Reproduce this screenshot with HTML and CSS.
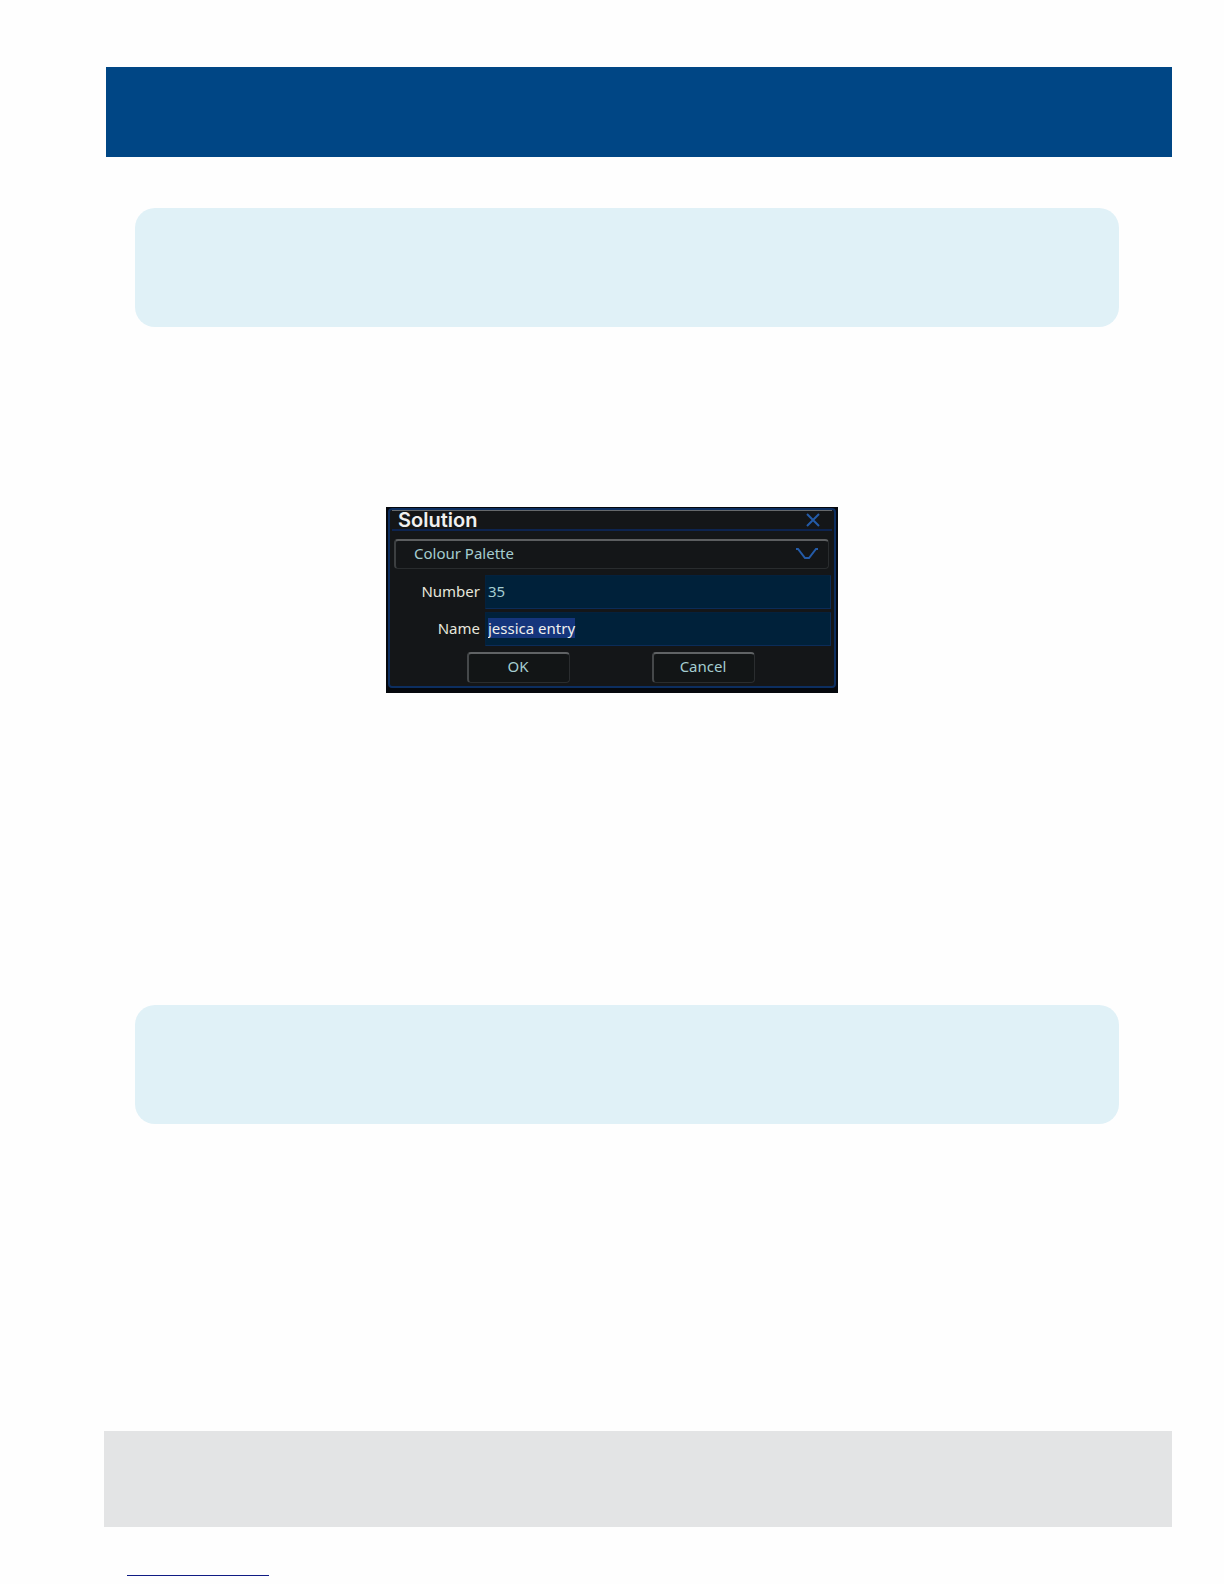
FILE: index.html
```html
<!DOCTYPE html>
<html lang="en">
<head>
	<meta charset="utf-8">
	<title>Solution</title>
	<link rel="stylesheet" href="styles.css">
	<script type="text/javascript">
		window.addEventListener('load', seleccionar);
		function seleccionar() {
			var nombre = document.getElementById("name");
			nombre.focus();
			nombre.select();
		}
	</script>
</head>
<body>
	<header class="banner"></header>
	<main>
		<div class="note"></div>
		<form class="dialog">
			<div class="window">
				<div class="titlebar">
					<h1 class="title">Solution</h1>
					<button type="button" class="close" aria-label="Close">
						<svg width="14" height="14" viewBox="0 0 14 14"><path d="M1 1L13 13M13 1L1 13"/></svg>
					</button>
				</div>
				<div class="type">
					<select class="list" aria-label="Type">
						<option>Colour Palette</option>
					</select>
					<svg class="arrow" width="22" height="12" viewBox="0 0 22 12"><path d="M0 1H2L9 10H13L20 1H22"/></svg>
				</div>
				<div class="fields">
					<label for="number">Number</label>
					<input type="text" id="number" class="field" value="35">
					<label for="name">Name</label>
					<input type="text" id="name" class="field" value="jessica entry">
				</div>
				<div class="buttons">
					<button type="button" class="boton">OK</button>
					<button type="button" class="boton">Cancel</button>
				</div>
			</div>
		</form>
		<div class="note"></div>
	</main>
	<footer class="footer"></footer>
	<a href="#" class="link" aria-label="Top"></a>
</body>
</html>
```
FILE: styles.css
```css
*
{
	box-sizing: border-box;
}
body
{
	margin: 0;
	padding-top: 67px;
	background-color: #fefefe;
	font-family: "Noto Sans", sans-serif;
	font-size: 15px;
}
.banner
{
	height: 90px;
	margin: 0 52px 0 106px;
	background-color: #004685;
}
.note
{
	height: 119px;
	margin: 51px 105px 0 135px;
	border-radius: 20px;
	background-color: #e0f1f7;
}
.dialog
{
	width: 452px;
	margin: 180px auto 312px;
	padding: 1px 2px 5px;
	background-color: #05080d;
}
.window
{
	padding: 0 2px 3px;
	border: 2px solid #0c2e60;
	border-radius: 4px;
	background-color: #141618;
}
.titlebar
{
	display: flex;
	justify-content: space-between;
	align-items: center;
	height: 21px;
	padding: 0 12px 0 6px;
	border-top: 1px solid #66696c;
	border-bottom: 2px solid #0d2450;
}
.title
{
	margin: 0;
	color: #f0f0f0;
	font-family: Inter, sans-serif;
	font-size: 20px;
	font-weight: 600;
	line-height: 18px;
}
.close
{
	display: flex;
	padding: 0;
	border: 0;
	background: none;
}
.close svg, .arrow
{
	fill: none;
	stroke: #245ba8;
	stroke-width: 2;
}
.type
{
	position: relative;
	margin: 8px 3px 6px 2px;
}
.list
{
	display: block;
	appearance: none;
	width: 100%;
	height: 30px;
	padding: 0 18px 3px;
	border: 1px solid #292c2e;
	border-top: 2px solid #5c5e60;
	border-left: 2px solid #3c3f41;
	border-radius: 4px;
	background-color: #141618;
	color: #a5cdd0;
	font: inherit;
}
.arrow
{
	position: absolute;
	top: 9px;
	right: 11px;
	pointer-events: none;
}
.fields
{
	display: grid;
	grid-template-columns: 88px 1fr;
	column-gap: 5px;
	row-gap: 3px;
	align-items: center;
	padding-right: 1px;
	color: #e6e6dc;
	text-align: right;
}
.fields label
{
	padding-bottom: 2px;
}
.field
{
	width: 100%;
	height: 34px;
	padding: 0 2px 2px;
	border: 1px solid #04213d;
	border-right-color: #0b2c58;
	border-bottom-color: #0b2c58;
	outline: none;
	background-color: #00213a;
	color: #a5cdd0;
	font: inherit;
}
.field::selection
{
	background-color: #15357c;
	color: #f0f0ee;
}
.buttons
{
	display: flex;
	gap: 82px;
	padding: 6px 0 0 75px;
}
.boton
{
	width: 103px;
	height: 31px;
	padding: 0 2px 4px 0;
	border: 1px solid #2a2d2f;
	border-top: 2px solid #606365;
	border-left: 2px solid #45484a;
	border-radius: 4px;
	background-color: #121516;
	color: #a5cdd0;
	font: inherit;
}
.footer
{
	height: 96px;
	margin: 307px 52px 0 104px;
	background-color: #e3e4e5;
}
.link
{
	display: block;
	width: 142px;
	height: 49px;
	margin-left: 127px;
	border-bottom: 1px solid #101c84;
}
```
